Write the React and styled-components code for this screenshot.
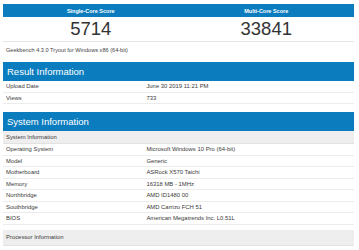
import React from "react";
import styled, { createGlobalStyle } from "styled-components";

const Global = createGlobalStyle`
  html, body { margin: 0; padding: 0; background: #fff; }
  body { font-family: "Liberation Sans", Arial, sans-serif; color: #333; }
`;

const Page = styled.div`
  padding: 4px 5px 0 3px;
  width: 351px;
`;

const ScoreGrid = styled.div`
  display: grid;
  grid-template-columns: 1fr 1fr;
`;

const ScoreHead = styled.div`
  background: #0b7dbf;
  color: #fff;
  font-weight: bold;
  font-size: 5.5px;
  height: 13px;
  display: flex;
  align-items: center;
  justify-content: center;
`;

const ScoreValue = styled.div`
  height: 24px;
  display: flex;
  align-items: center;
  justify-content: center;
  font-size: 18.5px;
  color: #333;
  border-bottom: 1px solid #e6e6e6;
`;

const Caption = styled.div`
  font-size: 5.6px;
  line-height: 8px;
  color: #444;
  padding: 4px 3px 0;
  margin-bottom: 8px;
`;

const SectionHead = styled.div`
  background: #0b7dbf;
  color: #fff;
  font-size: 9.5px;
  height: 19px;
  display: flex;
  align-items: center;
  padding-left: 4px;
`;

const Table = styled.div`
  margin-bottom: ${(p) => p.$mb || 0}px;
`;

const Row = styled.div`
  display: grid;
  grid-template-columns: 40% 60%;
  height: 11.5px;
  align-items: center;
  font-size: 5.9px;
  color: #3a3a3a;
  border-bottom: 1px solid #ececec;
  box-sizing: border-box;
`;

const SubHead = styled.div`
  background: #eeeeee;
  height: ${(p) => p.$h || 12}px;
  display: flex;
  align-items: center;
  padding-left: 3px;
  font-size: 5.9px;
  color: #3a3a3a;
  border-bottom: 1px solid #e2e2e2;
  margin-top: ${(p) => p.$mt || 0}px;
`;

const Cell = styled.div`
  padding-left: 3px;
  white-space: nowrap;
`;

const result = [
  ["Upload Date", "June 30 2019 11:21 PM"],
  ["Views", "733"],
];

const sys = [
  ["Operating System", "Microsoft Windows 10 Pro (64-bit)"],
  ["Model", "Generic"],
  ["Motherboard", "ASRock X570 Taichi"],
  ["Memory", "16318 MB - 1MHz"],
  ["Northbridge", "AMD ID1480 00"],
  ["Southbridge", "AMD Carrizo FCH 51"],
  ["BIOS", "American Megatrends Inc. L0.51L"],
];

export default function App() {
  return (
    <>
      <Global />
      <Page>
        <ScoreGrid>
          <ScoreHead>Single-Core Score</ScoreHead>
          <ScoreHead>Multi-Core Score</ScoreHead>
          <ScoreValue>5714</ScoreValue>
          <ScoreValue>33841</ScoreValue>
        </ScoreGrid>
        <Caption>Geekbench 4.3.0 Tryout for Windows x86 (64-bit)</Caption>

        <Table $mb={8}>
          <SectionHead>Result Information</SectionHead>
          {result.map(([k, v]) => (
            <Row key={k}>
              <Cell>{k}</Cell>
              <Cell>{v}</Cell>
            </Row>
          ))}
        </Table>

        <Table>
          <SectionHead>System Information</SectionHead>
          <SubHead>System Information</SubHead>
          {sys.map(([k, v]) => (
            <Row key={k}>
              <Cell>{k}</Cell>
              <Cell>{v}</Cell>
            </Row>
          ))}
          <SubHead $mt={5} $h={15}>Processor Information</SubHead>
        </Table>
      </Page>
    </>
  );
}
